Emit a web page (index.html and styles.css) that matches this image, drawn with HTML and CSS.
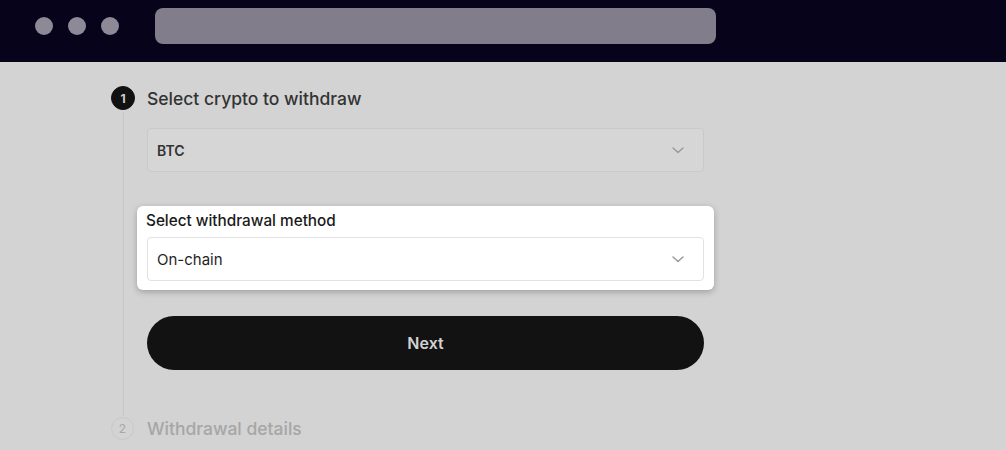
FILE: index.html
```html
<!DOCTYPE html>
<html lang="en">
<head>
    <meta charset="UTF-8">
    <meta name="viewport" content="width=device-width, initial-scale=1.0">
    <title>Withdraw</title>
    <link rel="stylesheet" href="styles.css">
</head>
<body>
    <div class="topbar">
        <div class="dots">
            <span class="dot"></span>
            <span class="dot"></span>
            <span class="dot"></span>
        </div>
        <div class="url-bar"></div>
    </div>

    <div class="page">
        <div class="step">
            <div class="step-num active">1</div>
            <div class="step-title">Select crypto to withdraw</div>
            <div class="rail"><div class="rail-line"></div></div>
            <div class="step-body">
                <div class="select dim">
                    <span>BTC</span>
                    <svg class="chevron" width="16" height="16" viewBox="0 0 16 16"><path d="M3 6l5 4.5L13 6" fill="none" stroke="currentColor" stroke-width="1.5" stroke-linecap="round" stroke-linejoin="round"/></svg>
                </div>

                <div class="card">
                    <div class="card-label">Select withdrawal method</div>
                    <div class="select">
                        <span>On-chain</span>
                        <svg class="chevron" width="16" height="16" viewBox="0 0 16 16"><path d="M3 6l5 4.5L13 6" fill="none" stroke="currentColor" stroke-width="1.5" stroke-linecap="round" stroke-linejoin="round"/></svg>
                    </div>
                </div>

                <button class="next-btn">Next</button>
            </div>
        </div>

        <div class="step">
            <div class="step-num">2</div>
            <div class="step-title muted">Withdrawal details</div>
        </div>
    </div>
</body>
</html>
```

FILE: styles.css
```css
body {
    margin: 0;
    font-family: Inter, "Open Sans", sans-serif;
    background: #d3d3d3;
    overflow: hidden;
}

.topbar {
    height: 62px;
    background: #06031a;
    display: flex;
    align-items: flex-start;
    padding: 8px 0 0 35px;
    box-sizing: border-box;
}

.dots {
    display: flex;
    gap: 15px;
    margin-top: 9px;
}

.dot {
    width: 18px;
    height: 18px;
    border-radius: 50%;
    background: #8d8996;
}

.url-bar {
    margin-left: 36px;
    width: 561px;
    height: 36px;
    border-radius: 8px;
    background: #817d8a;
}

.page {
    padding: 24px 0 0 111px;
}

.step {
    display: grid;
    grid-template-columns: 24px 557px;
    column-gap: 12px;
    align-items: center;
}

.step-num {
    width: 23px;
    height: 23px;
    border-radius: 50%;
    box-sizing: border-box;
    border: 1px solid #c8c8c8;
    color: #a8a8a8;
    font-size: 12px;
    display: flex;
    align-items: center;
    justify-content: center;
}

.step-num.active {
    width: 24px;
    height: 24px;
    background: #111;
    border-color: #111;
    color: #cfcfcf;
    font-weight: 700;
}

.step-title {
    font-size: 17.5px;
    font-weight: 500;
    color: #333;
}

.step-title.muted {
    color: #a6a6a6;
}

.rail {
    align-self: stretch;
    display: flex;
    justify-content: center;
    padding: 2px 0 1px;
}

.rail-line {
    width: 1px;
    background: #c6c6c6;
}

.step-body {
    padding: 18px 0 47px;
    display: flex;
    flex-direction: column;
}

.select {
    height: 44px;
    box-sizing: border-box;
    border: 1px solid #e2e2e2;
    border-radius: 4px;
    background: #fff;
    display: flex;
    align-items: center;
    justify-content: space-between;
    padding: 0 17px 0 9px;
    font-size: 15px;
    color: #1f1f1f;
}

.select.dim {
    background: #d6d6d6;
    border-color: #c9c9c9;
    color: #333;
    font-weight: 600;
    font-size: 14px;
}

.chevron {
    color: #9a9a9a;
}

.card {
    margin: 34px -10px 0 -10px;
    background: #fff;
    border-radius: 6px;
    padding: 6px 10px 9px;
    box-shadow: 0 2px 6px rgba(0, 0, 0, 0.25);
}

.card-label {
    font-size: 15.3px;
    font-weight: 500;
    color: #1a1a1a;
    line-height: 18px;
    margin: 0 0 7px -1px;
}

.next-btn {
    margin-top: 26px;
    height: 54px;
    border: none;
    border-radius: 27px;
    background: #121212;
    color: #d2d2d2;
    font-family: inherit;
    font-size: 16px;
    font-weight: 600;
}
```
